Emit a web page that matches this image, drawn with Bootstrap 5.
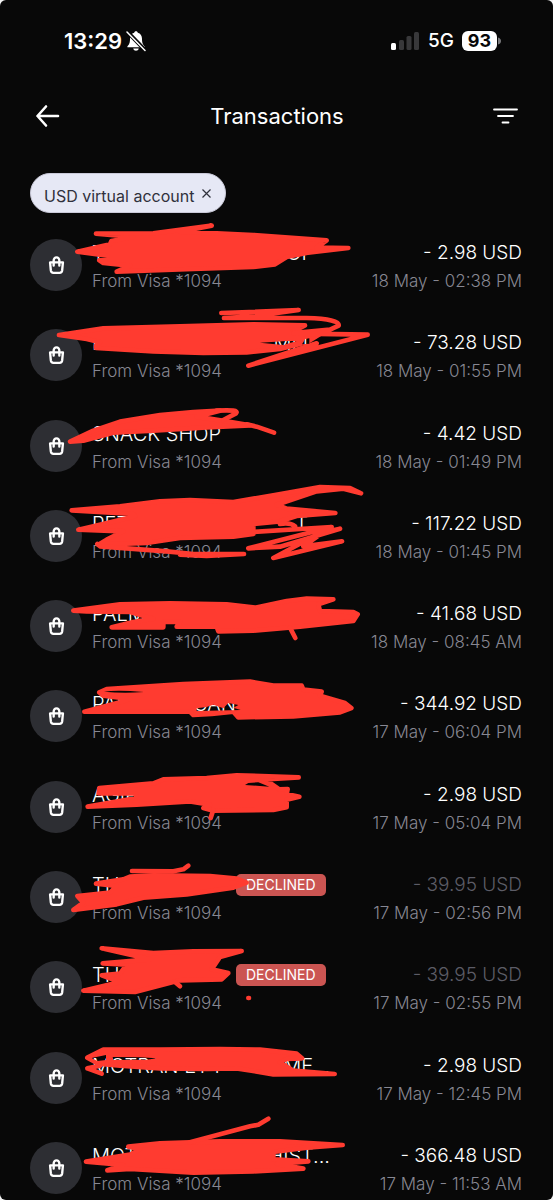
<!DOCTYPE html>
<html lang="en">
<head>
<meta charset="utf-8">
<meta name="viewport" content="width=device-width, initial-scale=1">
<title>Transactions</title>
<link href="https://cdn.jsdelivr.net/npm/bootstrap@5.3.0/dist/css/bootstrap.min.css" rel="stylesheet">
<style>
body { background: #f4f4f4; font-family: Inter, "Liberation Sans", sans-serif; }
.screen { background: #080808; color: #fff; border-radius: 6px; font-size: 20px; line-height: 28px; font-weight: 300; padding: 0 31px 2px 30px; }
.status { margin-top: 27px; padding: 0 21px 0 34px; font-weight: 600; }
.clock { font-size: 22px; }
.network { font-size: 19px; font-weight: 500; }
.battery { background: #fff; color: #080808; border-radius: 6px; width: 35px; line-height: 20px; font-size: 18px; font-weight: 700; }
.topbar { margin-top: 41px; height: 40px; }
.topbar h1 { font-size: 22px; font-weight: 400; line-height: 28px; }
.chip { margin-top: 37px; height: 40px; padding: 5px 14px 0 13px; border: 1px solid #c9c9d8; border-radius: 20px; background: #e6e8f5; color: #30313c; font-size: 16px; line-height: 24px; }
.feed { margin-top: 26px; }
.round-icon { width: 52px; height: 52px; background: #2d2e33; }
.info { margin-left: 10px; }
.masked { width: 216px; }
.masked-long { width: 238px; }
.masked-short { width: 144px; }
.amount { font-size: 19px; }
.note { font-size: 17px; color: #878792; }
.dim { color: #5c5c66; }
.declined { background: #cb5552; border-radius: 5px; font-size: 14px; line-height: 22px; font-weight: 400; padding: 0 10px; }
.scribble { position: absolute; left: -10px; top: -30px; width: 360px; height: 86px; pointer-events: none; fill: #ff3b30; stroke: #ff3b30; stroke-width: 14; stroke-linecap: round; stroke-linejoin: round; }
.scribble .pen { fill: none; }
.scribble mask path { fill: #000; stroke: none; }
.scribble mask rect { fill: #fff; stroke: none; }
</style>
</head>
<body>
<svg class="d-none" aria-hidden="true">
  <symbol id="bag" viewBox="0 0 18 20">
    <path d="M2.200 7.200H15.800L15 15.800Q14.700 18.300 12.300 18.300H5.700Q3.300 18.300 3 15.800ZM6 10.500V5.300a3 3.400 0 0 1 6 0v5.200" fill="none" stroke="#fff" stroke-width="2.500" stroke-linecap="round" stroke-linejoin="round"/>
  </symbol>
</svg>
<div class="screen min-vh-100 d-flex flex-column overflow-hidden">
  <div class="status d-flex align-items-center justify-content-between">
    <div class="d-flex align-items-center gap-1">
      <span class="clock">13:29</span>
      <svg width="20" height="22" viewBox="0 0 20 22" aria-hidden="true"><path d="M10 1.200c1 0 1.700.6 1.800 1.500 2.800.8 4.200 3 4.200 6 0 4.400 1 6 2.600 7.500v1H1.400v-1C3 14.700 4 13.100 4 8.700c0-3 1.400-5.200 4.200-6C8.300 1.800 9 1.200 10 1.200ZM7.200 18.600h5.600c-.4 1.400-1.400 2.200-2.800 2.200s-2.400-.8-2.800-2.200Z" fill="#fff"/><path d="M1 1.500 19 20" stroke="#080808" stroke-width="4"/><path d="M1 2 19 20.500" stroke="#fff" stroke-width="1.500" stroke-linecap="round"/></svg>
    </div>
    <div class="d-flex align-items-center">
      <svg class="me-2" width="29" height="20" viewBox="0 0 29 20" aria-hidden="true"><rect x="0" y="12" width="5" height="7" rx="1.500" fill="#fff"/><g fill="#38383a"><rect x="8" y="9" width="5" height="10" rx="1.500"/><rect x="15.500" y="5" width="5" height="14" rx="1.500"/><rect x="23" y="1" width="5" height="18" rx="1.500"/></g></svg>
      <span class="network me-2">5G</span>
      <span class="battery text-center">93</span>
      <svg width="4" height="10" viewBox="0 0 4 10" aria-hidden="true"><path d="M1 1.500Q4 2.500 4 5T1 8.500Z" fill="#77777a"/></svg>
    </div>
  </div>

  <header class="topbar d-flex align-items-center justify-content-between">
    <button class="btn p-0 border-0 ms-1 d-flex" aria-label="Back"><svg width="28" height="24" viewBox="0 0 28 24" fill="none" stroke="#fff" stroke-width="2.600" stroke-linecap="round" stroke-linejoin="round"><path d="M24 12H3.500M12 2.500 3.500 12l8.500 9.500"/></svg></button>
    <h1 class="m-0">Transactions</h1>
    <button class="btn p-0 border-0 me-1 d-flex" aria-label="Filter"><svg width="26" height="18" viewBox="0 0 26 18" fill="none" stroke="#fff" stroke-width="1.800" stroke-linecap="round"><path d="M2 2.500H25M6 9H21M10.500 15.500H16.500"/></svg></button>
  </header>

  <button class="chip d-flex align-items-center align-self-start gap-2">USD virtual account<svg class="mb-1" width="9" height="9" viewBox="0 0 9 9" aria-hidden="true"><path d="M.5.5 8.500 8.500M8.500.5.5 8.500" stroke="#30313c" stroke-width="1.200"/></svg></button>

  <ul class="feed list-unstyled mb-0 flex-fill d-flex flex-column justify-content-between">
    <li class="d-flex position-relative">
      <span class="round-icon rounded-circle d-flex align-items-center justify-content-center"><svg width="17" height="20"><use href="#bag"/></svg></span>
      <div class="info me-auto"><div class="masked-long d-flex justify-content-between pe-3"><span>T</span><span>OP</span></div><div class="note">From Visa *1094</div></div>
      <div class="text-end"><div class="amount">- 2.98 USD</div><div class="note">18 May - 02:38 PM</div></div>
      <svg class="scribble" viewBox="0 -18 1080 258" aria-hidden="true"><path d="M228 56 400 55 575 32 480 50 590 55 700 60 920 76 890 98 985 99 870 112 800 126 765 148 700 156 520 162 290 170 330 152 250 144 238 136 262 130 262 122 172 110 270 88 274 78 340 66Z"/></svg>
    </li>
    <li class="d-flex position-relative">
      <span class="round-icon rounded-circle d-flex align-items-center justify-content-center"><svg width="17" height="20"><use href="#bag"/></svg></span>
      <div class="info me-auto"><div class="masked d-flex justify-content-between"><span>F</span><span>MLI</span></div><div class="note">From Visa *1094</div></div>
      <div class="text-end"><div class="amount">- 73.28 USD</div><div class="note">18 May - 01:55 PM</div></div>
      <svg class="scribble" viewBox="0 -2 1080 258" aria-hidden="true"><mask id="gap-b" maskUnits="userSpaceOnUse" x="0" y="-2" width="1080" height="258"><rect y="-2" width="1080" height="258"/><path d="M720 129 800 124 830 124 790 136ZM846 134 856 118 868 116 868 132Z"/></mask><g mask="url(#gap-b)"><path d="M117 106 250 86 480 80 700 74 855 77 820 95 900 103 860 128 780 148 680 158 550 160 400 155 228 145 228 138 240 128 200 118Z"/><path class="pen" d="M604 40 720 36 836 31 700 50 612 55 860 55Q960 58 956 78L930 90 820 100M840 102 1043 105 685 198 890 131"/></g></svg>
    </li>
    <li class="d-flex position-relative">
      <span class="round-icon rounded-circle d-flex align-items-center justify-content-center"><svg width="17" height="20"><use href="#bag"/></svg></span>
      <div class="info me-auto"><div>SNACK SHOP</div><div class="note">From Visa *1094</div></div>
      <div class="text-end"><div class="amount">- 4.42 USD</div><div class="note">18 May - 01:49 PM</div></div>
      <svg class="scribble" viewBox="0 0 1080 258" aria-hidden="true"><path d="M150 155 220 122 300 95 420 75 520 66 600 62 530 80 620 94 690 106 560 112 400 122 280 128 190 152Z"/><path class="pen" d="M590 62Q660 58 648 70L610 90M680 103 710 110 762 128"/></svg>
    </li>
    <li class="d-flex position-relative">
      <span class="round-icon rounded-circle d-flex align-items-center justify-content-center"><svg width="17" height="20"><use href="#bag"/></svg></span>
      <div class="info me-auto"><div class="masked d-flex justify-content-between"><span>PET</span><span>T</span></div><div class="note">From Visa *1094</div></div>
      <div class="text-end"><div class="amount">- 117.22 USD</div><div class="note">18 May - 01:45 PM</div></div>
      <svg class="scribble" viewBox="0 16 1080 258" aria-hidden="true"><path d="M155 107 300 95 420 80 510 76 640 82 760 62 900 37 990 40 1023 56 970 42 890 50 770 90 800 102 946 115 830 124 780 140 700 148 700 178 640 186 480 190 380 205 235 210 260 195 310 170 175 165 220 155 345 125 340 118Z"/><path class="pen" d="M232 208 240 215 440 230 520 238 672 238 560 244 480 240M700 172 935 157 685 221 780 216 960 162 900 175 760 250 966 200 850 215 900 180M780 148Q810 142 825 155"/></svg>
    </li>
    <li class="d-flex position-relative">
      <span class="round-icon rounded-circle d-flex align-items-center justify-content-center"><svg width="17" height="20"><use href="#bag"/></svg></span>
      <div class="info me-auto"><div class="masked">PALM</div><div class="note">From Visa *1094</div></div>
      <div class="text-end"><div class="amount">- 41.68 USD</div><div class="note">18 May - 08:45 AM</div></div>
      <svg class="scribble" viewBox="0 2 1080 258" aria-hidden="true"><path d="M160 124 300 105 450 102 620 105 705 115 800 95 860 88 940 90 895 105 900 125 1000 128 1013 135 1000 155 840 172 700 184 595 186 590 172 470 172 480 158 430 158 430 174 275 174 340 158 400 148 330 128 200 126Z"/><path class="pen" d="M810 175 826 206"/></svg>
    </li>
    <li class="d-flex position-relative">
      <span class="round-icon rounded-circle d-flex align-items-center justify-content-center"><svg width="17" height="20"><use href="#bag"/></svg></span>
      <div class="info me-auto"><div class="masked-short d-flex justify-content-between"><span>PAL</span><span>CAN</span></div><div class="note">From Visa *1094</div></div>
      <div class="text-end"><div class="amount">- 344.92 USD</div><div class="note">17 May - 06:04 PM</div></div>
      <svg class="scribble" viewBox="0 3 1080 258" aria-hidden="true"><mask id="gap-f" maskUnits="userSpaceOnUse" x="0" y="3" width="1080" height="258"><rect y="3" width="1080" height="258"/><path d="M252 98Q290 92 372 99 310 104 252 98ZM530 148 560 144 580 137 610 148 625 132 655 138 640 146 662 153 530 156Z"/></mask><g mask="url(#gap-f)"><path d="M193 158 300 130 330 120 250 110 238 100 260 90 490 75 690 68 760 80 845 80 850 92 905 98 900 110 975 132 994 147 960 160 820 172 655 175 640 158 575 165 520 168 510 158Z"/></g></svg>
    </li>
    <li class="d-flex position-relative">
      <span class="round-icon rounded-circle d-flex align-items-center justify-content-center"><svg width="17" height="20"><use href="#bag"/></svg></span>
      <div class="info me-auto"><div class="masked">AGIP</div><div class="note">From Visa *1094</div></div>
      <div class="text-end"><div class="amount">- 2.98 USD</div><div class="note">17 May - 05:04 PM</div></div>
      <svg class="scribble" viewBox="0 -11 1080 258" aria-hidden="true"><mask id="gap-g" maskUnits="userSpaceOnUse" x="0" y="-11" width="1080" height="258"><rect y="-11" width="1080" height="258"/><path d="M675 91 685 85 715 83 748 96Z"/></mask><g mask="url(#gap-g)"><path d="M238 100 400 86 430 74 560 70 650 62 836 68 735 74 778 104 803 103 800 118 838 126 800 135 800 158 760 166 580 168 550 160 570 150 510 140 350 150 203 156 350 130 345 116 236 116Z"/></g><path class="pen" d="M580 165 572 190"/></svg>
    </li>
    <li class="d-flex position-relative">
      <span class="round-icon rounded-circle d-flex align-items-center justify-content-center"><svg width="17" height="20"><use href="#bag"/></svg></span>
      <div class="info me-auto"><div class="d-flex align-items-center"><span class="masked-short">TH</span><span class="declined">DECLINED</span></div><div class="note">From Visa *1094</div></div>
      <div class="text-end"><div class="amount dim">- 39.95 USD</div><div class="note">17 May - 02:56 PM</div></div>
      <svg class="scribble" viewBox="0 -25 1080 258" aria-hidden="true"><path d="M228 103 310 90 330 82 400 78 570 80 650 88 680 100 640 115 500 135 370 145 290 165 160 182 190 160 172 140 270 130 290 110Z"/><path class="pen" d="M336 65 460 66 490 60 505 49"/></svg>
    </li>
    <li class="d-flex position-relative">
      <span class="round-icon rounded-circle d-flex align-items-center justify-content-center"><svg width="17" height="20"><use href="#bag"/></svg></span>
      <div class="info me-auto"><div class="d-flex align-items-center"><span class="masked-short">TH</span><span class="declined">DECLINED</span></div><div class="note">From Visa *1094</div></div>
      <div class="text-end"><div class="amount dim">- 39.95 USD</div><div class="note">17 May - 02:55 PM</div></div>
      <svg class="scribble" viewBox="0 247 1080 258" aria-hidden="true"><path d="M245 299 400 313 520 308 665 307 600 325 575 362 625 373 605 392 480 395 345 430 190 426 300 400 245 380 300 375 320 348 248 344 390 332Z"/><path class="pen" d="M465 400 480 413"/><path d="M685 448H687"/></svg>
    </li>
    <li class="d-flex position-relative">
      <span class="round-icon rounded-circle d-flex align-items-center justify-content-center"><svg width="17" height="20"><use href="#bag"/></svg></span>
      <div class="info me-auto"><div class="masked-long d-flex justify-content-between"><span>MOTRAN ET P</span><span>ME...</span></div><div class="note">From Visa *1094</div></div>
      <div class="text-end"><div class="amount">- 2.98 USD</div><div class="note">17 May - 12:45 PM</div></div>
      <svg class="scribble" viewBox="0 -37 1080 258" aria-hidden="true"><mask id="gap-j" maskUnits="userSpaceOnUse" x="0" y="-37" width="1080" height="258"><rect y="-37" width="1080" height="258"/><path d="M215 71 258 62 258 77 232 80ZM278 68 360 69 410 72 380 76 280 77Z"/></mask><g mask="url(#gap-j)"><path d="M202 70 250 46 420 46 600 44 720 46 830 58 846 72 800 74 780 84 820 109 944 119 760 120 650 102 560 104 420 102 300 94 235 88Z"/><path class="pen" d="M202 102 240 94M202 102 245 118"/></g></svg>
    </li>
    <li class="d-flex position-relative">
      <span class="round-icon rounded-circle d-flex align-items-center justify-content-center"><svg width="17" height="20"><use href="#bag"/></svg></span>
      <div class="info me-auto"><div class="masked-long d-flex justify-content-between"><span>MOT</span><span>HIST...</span></div><div class="note">From Visa *1094</div></div>
      <div class="text-end"><div class="amount">- 366.48 USD</div><div class="note">17 May - 11:53 AM</div></div>
      <svg class="scribble" viewBox="0 234 1080 258" aria-hidden="true"><path d="M325 338 420 328 600 322 780 322 968 333 860 341 760 354 760 376 865 382 770 390 850 404 700 412 520 416 330 405 262 409 310 393 198 383 330 362 360 345Z"/><path class="pen" d="M745 254 715 272 690 277 510 325"/></svg>
    </li>
  </ul>
</div>
<script src="https://cdn.jsdelivr.net/npm/bootstrap@5.3.0/dist/js/bootstrap.bundle.min.js"></script>
</body>
</html>
